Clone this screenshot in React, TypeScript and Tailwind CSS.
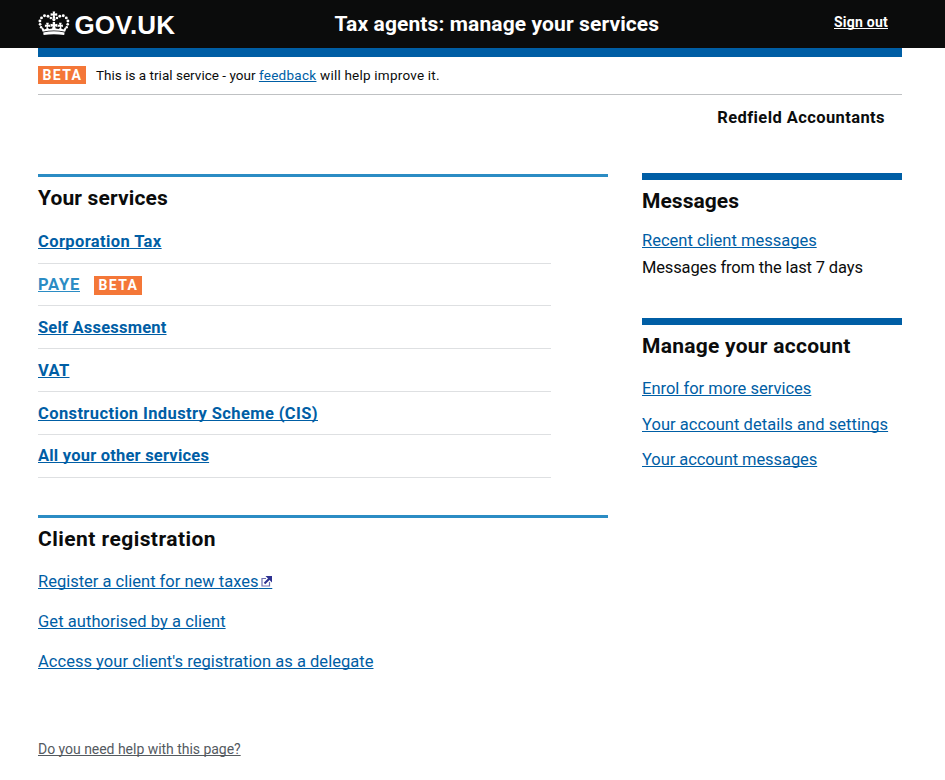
import type { ReactNode } from "react";

const linkBase =
  "underline decoration-1 underline-offset-[1px] [text-decoration-skip-ink:none] whitespace-nowrap";

function Link({ children, className = "" }: { children: ReactNode; className?: string }) {
  return (
    <a href="#" className={`${linkBase} ${className}`}>
      {children}
    </a>
  );
}

function BetaTag({ className = "" }: { className?: string }) {
  return (
    <strong
      className={`flex w-12 items-center bg-[#f47738] pl-[4.5px] text-[14px] leading-none font-bold tracking-[1.35px] text-white ${className}`}
    >
      BETA
    </strong>
  );
}

function Crown() {
  return (
    <svg width="32" height="26" viewBox="0 0 32 26" fill="#fff" className="shrink-0">
      <path d="M14.600 1.500h2.600l-.5 2.100 2.500-.4v2.600l-2.500-.4.7 3h-3l.7-3-2.500.4V3.200l2.500.4z" />
      <circle cx="15.900" cy="9.600" r="1.600" />
      <circle cx="12.800" cy="7.900" r="1.250" />
      <circle cx="10" cy="6.300" r="1.450" />
      <circle cx="6.500" cy="5.800" r="1.450" />
      <circle cx="3.500" cy="7.900" r="1.450" />
      <circle cx="1.900" cy="11" r="1.450" />
      <circle cx="2.100" cy="14.300" r="1.350" />
      <circle cx="3.100" cy="17.200" r="1.250" />
      <circle cx="19" cy="7.900" r="1.250" />
      <circle cx="21.800" cy="6.300" r="1.450" />
      <circle cx="25.300" cy="5.800" r="1.450" />
      <circle cx="28.300" cy="7.900" r="1.450" />
      <circle cx="29.900" cy="11" r="1.450" />
      <circle cx="29.700" cy="14.300" r="1.350" />
      <circle cx="28.700" cy="17.200" r="1.250" />
      <path d="M14.700 12h2.400v2.300l2.200-.6v3.200l-2.200-.7.6 2.300 2.900.5 1.600-1.300-.9-1.200-1.500.5v-2.500l1.600.4-.4-2.200h2.700l-.5 2.200 1.700-.4v2.600l-1.700-.6.2 2.300 2.200.6 1.300-1.800 1.500.8-1.300 3.300q-11.200-2.500-22.400 0l-1.300-3.300 1.500-.8 1.300 1.800 2.200-.6.2-2.300-1.700.6v-2.600l1.700.4-.5-2.200h2.700l-.4 2.200 1.600-.4V17l-1.500-.5-.9 1.200 1.600 1.300 2.900-.5.600-2.300-2.200.7v-3.200l2.200.6z" />
      <path d="M5.200 22.400q10.700-2.300 21.400 0l-.4 2.500q-10.300-1.300-20.600 0z" />
    </svg>
  );
}

function ExternalIcon() {
  return (
    <span className="relative tracking-[9.700px]">
      &nbsp;
      <svg
        width="11"
        height="11"
        viewBox="0 0 11 11"
        fill="none"
        stroke="#2e3191"
        className="absolute right-0 bottom-[4px]"
      >
        <path d="M5 2.500H1v7.500h7.500V6" strokeWidth="1.200" opacity="0.7" />
        <path d="M3.500 7.500L8.500 2.500" strokeWidth="2.200" />
        <path d="M4.500 0H11v6.500z" fill="#2e3191" stroke="none" />
      </svg>
    </span>
  );
}

const services = [
  { name: "Corporation Tax", track: "tracking-[0.39px]", row: "h-[43px]" },
  { name: "PAYE", track: "tracking-[0.79px]", row: "h-[42px]", beta: true },
  { name: "Self Assessment", track: "tracking-[0.21px]", row: "h-[43px] pt-[2px]" },
  { name: "VAT", track: "tracking-[0.33px]", row: "h-[43px] pt-[2px]" },
  { name: "Construction Industry Scheme (CIS)", track: "tracking-[0.39px]", row: "h-[43px] pt-[2px]" },
  { name: "All your other services", track: "tracking-[0.21px]", row: "h-[43px]" },
];

export default function App() {
  return (
    <div className="min-h-[780px] bg-white font-['Roboto','Noto_Sans',sans-serif] text-[16.5px] leading-6 text-[#0b0c0c]">
      <header className="h-12 bg-[#0b0c0c] text-white">
        <div className="flex h-12 items-start pl-[38px]">
          <a href="#" className="flex w-[296.5px] items-start">
            <span className="pt-[10px]">
              <Crown />
            </span>
            <span className="ml-[4.500px] pt-[9px] font-['Liberation_Sans',sans-serif] text-[26px] leading-8 font-bold tracking-[0.050px]">
              GOV.UK
            </span>
          </a>
          <span className="w-[499.5px] pt-[10px] text-[21px] leading-7 font-bold tracking-[0.11px]">
            Tax agents: manage your services
          </span>
          <Link className="mt-3 text-[14px] leading-5 font-bold tracking-[0.23px]">Sign out</Link>
        </div>
      </header>

      <div className="ml-[38px] w-[864px]">
        <div className="h-[9px] bg-[#005ea5]" />
        <div className="flex h-[38px] items-start border-b border-[#bfc1c3] pt-[9px]">
          <BetaTag className="h-[18px]" />
          <p className="ml-[10px] text-[13.5px] leading-[18px] whitespace-nowrap">
            <span className="tracking-[0.02px]">This is a trial service - your </span>
            <Link className="tracking-[0.28px] text-[#005ea5]">feedback</Link>
            <span className="tracking-[0.22px]"> will help improve it.</span>
          </p>
        </div>

        <p className="mt-[11px] mr-[17px] text-right font-bold tracking-[0.41px]">Redfield Accountants</p>

        <div className="mt-[43px] flex items-start justify-between">
          <main className="w-[570px] pt-px">
            <section className="border-t-[3px] border-[#2b8cc4] pt-[7px]">
              <h2 className="text-[21px] leading-7 font-bold tracking-[0.14px]">Your services</h2>
              <ul className="mt-[9px] w-[513px]">
                {services.map((s) => (
                  <li key={s.name} className={`flex items-center border-b border-[#dee0e2] ${s.row}`}>
                    <Link className={`font-bold ${s.track} ${s.beta ? "text-[#2b8cc4]" : "text-[#005ea5]"}`}>
                      {s.name}
                    </Link>
                    {s.beta && <BetaTag className="mt-[2px] ml-[14px] h-[19px] pb-[2px]" />}
                  </li>
                ))}
              </ul>
            </section>

            <section className="mt-[37px] border-t-[3px] border-[#2b8cc4] pt-[7px]">
              <h2 className="text-[21px] leading-7 font-bold tracking-[0.45px]">Client registration</h2>
              <ul className="mt-[17px] flex flex-col gap-4 text-[#005ea5]">
                <li className="h-6">
                  <Link>
                    Register a client for new taxes
                    <ExternalIcon />
                  </Link>
                </li>
                <li className="h-6">
                  <Link className="tracking-[0.07px]">Get authorised by a client</Link>
                </li>
                <li className="h-6">
                  <Link className="tracking-[0.03px]">Access your client's registration as a delegate</Link>
                </li>
              </ul>
            </section>
          </main>

          <aside className="w-[260px]">
            <section className="border-t-[7px] border-[#005ea5] pt-[7px]">
              <h2 className="text-[21px] leading-7 font-bold tracking-[0.04px]">Messages</h2>
              <p className="mt-[14px]">
                <Link className="text-[#005ea5]">Recent client messages</Link>
              </p>
              <p className="mt-[3px] tracking-[-0.15px] whitespace-nowrap">Messages from the last 7 days</p>
            </section>

            <section className="mt-[38px] border-t-[7px] border-[#005ea5] pt-[7px]">
              <h2 className="text-[21px] leading-7 font-bold tracking-[0.26px]">Manage your account</h2>
              <ul className="mt-[17px] text-[#005ea5]">
                <li className="h-6">
                  <Link>Enrol for more services</Link>
                </li>
                <li className="mt-3 h-6">
                  <Link className="tracking-[0.05px]">Your account details and settings</Link>
                </li>
                <li className="mt-[11px] h-6">
                  <Link className="tracking-[-0.07px]">Your account messages</Link>
                </li>
              </ul>
            </section>
          </aside>
        </div>

        <footer className="mt-[63px]">
          <Link className="text-[14px] tracking-[-0.03px] text-[#545a5f]">Do you need help with this page?</Link>
        </footer>
      </div>
    </div>
  );
}
